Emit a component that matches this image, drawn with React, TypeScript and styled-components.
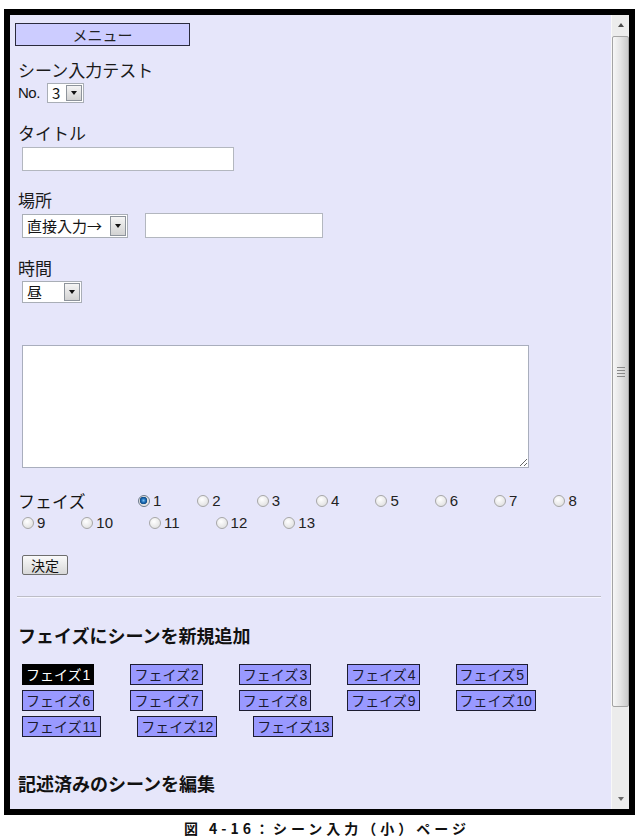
import React from 'react'
import styled, { createGlobalStyle } from 'styled-components'

const GlobalStyle = createGlobalStyle`
  html, body {
    margin: 0;
    padding: 0;
    background: #fff;
    overflow: hidden;
  }
  body {
    font-family: 'Liberation Sans', 'Noto Sans CJK JP', sans-serif;
    color: #141414;
  }
`

const Page = styled.div`
  width: 638px;
  height: 839px;
  box-sizing: border-box;
  padding: 9px 0 0 4px;
`

const Frame = styled.div`
  width: 631px;
  height: 806px;
  box-sizing: border-box;
  border: 6px solid #000;
  display: flex;
`

const Viewport = styled.div`
  flex: 1;
  background: #e6e6fa;
  overflow: hidden;
`

const Content = styled.div`
  padding: 8px 8px 0 8px;
  display: flex;
  flex-direction: column;
  align-items: flex-start;
`

const MenuButton = styled.div`
  margin-left: -3px;
  width: 175px;
  height: 23px;
  box-sizing: border-box;
  border: 1px solid #2a2a3c;
  background: #ccccff;
  font-family: 'Noto Sans CJK JP', sans-serif;
  font-size: 15px;
  line-height: 21px;
  text-align: center;
  color: #222;
`

const Label = styled.div<{ $mt: number }>`
  margin-top: ${({ $mt }) => $mt}px;
  font-family: 'Noto Sans CJK JP', sans-serif;
  font-size: 17px;
  line-height: 22px;
  color: #1a1a1a;
`

const Row = styled.div<{ $mt: number; $gap?: number }>`
  margin-top: ${({ $mt }) => $mt}px;
  display: flex;
  align-items: center;
  gap: ${({ $gap }) => $gap ?? 0}px;
`

const NoText = styled.span`
  font-size: 15px;
  line-height: 22px;
  width: 29px;
  letter-spacing: -0.5px;
`

const SelectBox = styled.div<{ $w: number; $h: number; $ml?: number }>`
  width: ${({ $w }) => $w}px;
  height: ${({ $h }) => $h}px;
  margin-left: ${({ $ml }) => $ml ?? 0}px;
  box-sizing: border-box;
  border: 1px solid #a9aeb6;
  background: #fff;
  display: flex;
  align-items: stretch;
  padding: 1px;
`

const SelectValue = styled.span`
  flex: 1;
  padding-left: 3px;
  font-family: 'Noto Sans CJK JP', sans-serif;
  font-size: 15px;
  line-height: 16px;
  display: flex;
  align-items: center;
  white-space: nowrap;
`

const SelectArrow = styled.span`
  width: 16px;
  flex: none;
  box-sizing: border-box;
  border: 1px solid #8e949c;
  background: linear-gradient(#f5f5f5, #d2d2d2);
  display: flex;
  align-items: center;
  justify-content: center;
  &::after {
    content: '';
    border-left: 3.5px solid transparent;
    border-right: 3.5px solid transparent;
    border-top: 4px solid #111;
  }
`

const TextBox = styled.input<{ $w: number; $h: number; $ml?: number }>`
  width: ${({ $w }) => $w}px;
  height: ${({ $h }) => $h}px;
  margin: 0 0 0 ${({ $ml }) => $ml ?? 0}px;
  box-sizing: border-box;
  border: 1px solid #b3b7bf;
  background: #fff;
  padding: 0 3px;
  outline: none;
`

const TextArea = styled.textarea`
  margin: 42px 0 0 4px;
  width: 507px;
  height: 123px;
  box-sizing: border-box;
  border: 1px solid #a9aebd;
  background: #fff;
  resize: both;
  outline: none;
`

const RadioGroup = styled.div`
  margin-top: 22px;
  width: 585px;
  display: flex;
  flex-wrap: wrap;
  column-gap: 32px;
  line-height: 22px;
`

const GroupLabel = styled.span`
  width: 84px;
  margin-right: -32px;
  padding-right: 32px;
  font-family: 'Noto Sans CJK JP', sans-serif;
  font-size: 17px;
`

const RadioOption = styled.label`
  display: inline-flex;
  align-items: center;
  font-size: 15px;
  color: #222;
`

const Radio = styled.input.attrs({ type: 'radio' })`
  appearance: none;
  width: 12px;
  height: 12px;
  margin: 0 3px 0 4px;
  box-sizing: border-box;
  border-radius: 50%;
  border: 1px solid #a7a7a7;
  background: radial-gradient(circle at 40% 35%, #ffffff, #d9d9d9);
  &:checked {
    border-color: #6c7a8a;
    background: radial-gradient(circle at 45% 45%, #7ec0f0 0, #1f6fb8 2px, #0e4a86 3.5px, #dcdcdc 4px, #f4f4f4 6px);
  }
`

const SubmitButton = styled.button`
  margin: 21px 0 0 4px;
  width: 46px;
  height: 20px;
  box-sizing: border-box;
  padding: 0;
  border: 1px solid #6e6e6e;
  border-radius: 2px;
  background: linear-gradient(#fafafa, #d8d8d8);
  font-family: 'Noto Sans CJK JP', sans-serif;
  font-size: 14px;
  line-height: 16px;
  color: #111;
`

const Rule = styled.hr`
  margin: 21px 0 0 -1px;
  width: 584px;
  height: 0;
  border: none;
  border-top: 1px solid #bdbdc6;
  border-bottom: 1px solid #f6f6ff;
`

const Heading = styled.h3<{ $mt: number }>`
  margin: ${({ $mt }) => $mt}px 0 0 0;
  font-family: 'Noto Sans CJK JP', sans-serif;
  font-size: 18px;
  font-weight: 700;
  line-height: 24px;
  color: #111;
`

const PhaseGrid = styled.div`
  margin: 17px 0 0 4px;
  width: 580px;
  display: flex;
  flex-wrap: wrap;
  column-gap: 36px;
  row-gap: 5px;
`

const PhaseButton = styled.span<{ $active?: boolean }>`
  height: 21px;
  box-sizing: border-box;
  padding: 0 3px;
  border: 1px solid ${({ $active }) => ($active ? '#000' : '#1c1c30')};
  background: ${({ $active }) => ($active ? '#000' : '#9999ff')};
  color: ${({ $active }) => ($active ? '#fff' : '#1a1a2e')};
  font-family: 'Noto Sans CJK JP', sans-serif;
  font-size: 14px;
  line-height: 19px;
  white-space: nowrap;
`

const Digits = styled.span`
  margin-left: 1px;
  font-family: 'Liberation Sans', sans-serif;
`

const Scrollbar = styled.div`
  width: 18px;
  background: #ececec;
  border-left: 1px solid #f8f8f8;
  box-sizing: border-box;
  display: flex;
  flex-direction: column;
`

const ScrollArrow = styled.div<{ $down?: boolean }>`
  height: 20px;
  display: flex;
  align-items: center;
  justify-content: center;
  &::after {
    content: '';
    border-left: 3.5px solid transparent;
    border-right: 3.5px solid transparent;
    ${({ $down }) => ($down ? 'border-top: 4px solid #6a6a6a;' : 'border-bottom: 4px solid #4a4a4a;')}
  }
`

const Thumb = styled.div`
  margin: 1px 0 0 0;
  height: 671px;
  box-sizing: border-box;
  border: 1px solid #a4a4a4;
  border-radius: 2px;
  background: linear-gradient(to right, #f7f7f7, #e4e4e4 50%, #cacaca);
  display: flex;
  flex-direction: column;
  align-items: center;
  justify-content: center;
  gap: 2px;
`

const Grip = styled.span`
  width: 8px;
  height: 1px;
  background: #8a8a8a;
`

const Track = styled.div`
  flex: 1;
`

const Caption = styled.div`
  margin-top: 3px;
  padding-left: 12px;
  text-align: center;
  font-family: 'Noto Sans CJK JP', sans-serif;
  font-size: 14px;
  font-weight: 700;
  line-height: 20px;
  letter-spacing: 4px;
  color: #111;
`

const radios = Array.from({ length: 13 }, (_, i) => i + 1)

export default function App() {
  return (
    <Page>
      <GlobalStyle />
      <Frame>
        <Viewport>
          <Content>
            <MenuButton>メニュー</MenuButton>
            <Label $mt={13}>シーン入力テスト</Label>
            <Row $mt={1} $gap={0}>
              <NoText>No.</NoText>
              <SelectBox $w={37} $h={20}>
                <SelectValue>3</SelectValue>
                <SelectArrow />
              </SelectBox>
            </Row>

            <Label $mt={18}>タイトル</Label>
            <Row $mt={3}>
              <TextBox $w={212} $h={24} $ml={4} />
            </Row>

            <Label $mt={18}>場所</Label>
            <Row $mt={2} $gap={17}>
              <SelectBox $w={106} $h={24} $ml={4}>
                <SelectValue>直接入力→</SelectValue>
                <SelectArrow />
              </SelectBox>
              <TextBox $w={178} $h={25} />
            </Row>

            <Label $mt={19}>時間</Label>
            <Row $mt={2}>
              <SelectBox $w={60} $h={22} $ml={4}>
                <SelectValue>昼</SelectValue>
                <SelectArrow />
              </SelectBox>
            </Row>

            <TextArea />

            <RadioGroup>
              <GroupLabel>フェイズ</GroupLabel>
              {radios.map((n) => (
                <RadioOption key={n}>
                  <Radio name="phase" defaultChecked={n === 1} />
                  {n}
                </RadioOption>
              ))}
            </RadioGroup>

            <SubmitButton>決定</SubmitButton>
            <Rule />

            <Heading $mt={25}>フェイズにシーンを新規追加</Heading>
            <PhaseGrid>
              {radios.map((n) => (
                <PhaseButton key={n} $active={n === 1}>
                  フェイズ<Digits>{n}</Digits>
                </PhaseButton>
              ))}
            </PhaseGrid>

            <Heading $mt={34}>記述済みのシーンを編集</Heading>
          </Content>
        </Viewport>
        <Scrollbar>
          <ScrollArrow />
          <Thumb>
            <Grip />
            <Grip />
            <Grip />
            <Grip />
          </Thumb>
          <Track />
          <ScrollArrow $down />
        </Scrollbar>
      </Frame>
      <Caption>図 4-16：シーン入力（小）ページ</Caption>
    </Page>
  )
}
